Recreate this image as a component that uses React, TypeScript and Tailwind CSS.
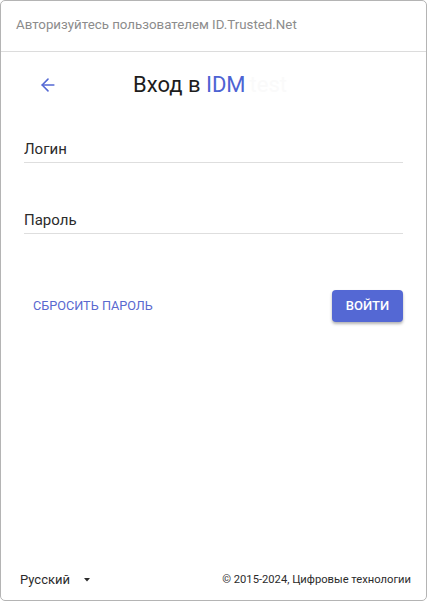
import { ArrowLeft } from "lucide-react";

export default function App() {
  return (
    <div
      className="flex h-[601px] w-[427px] flex-col overflow-hidden rounded-[5px] border border-[#b4b4b4] bg-white text-[#212121]"
      style={{ fontFamily: "Roboto, 'Liberation Sans', sans-serif" }}
    >
      <header className="flex h-[51px] shrink-0 items-center border-b border-[#dcdcdc] px-[15px] pb-[2px]">
        <span className="text-[13.3px] text-[#8c8c8c]">Авторизуйтесь пользователем ID.Trusted.Net</span>
      </header>

      <main className="flex flex-1 flex-col px-[23px]">
        <div className="mt-[18px] flex h-[30px] items-center">
          <button className="ml-[13px] flex h-[24px] w-[22px] items-center justify-center text-[#5468d4]">
            <ArrowLeft size={20} strokeWidth={1.9} />
          </button>
          <h1 className="ml-[74px] text-[22px] leading-none text-[#1d1d1d]">
            Вход в <span className="text-[#4d63d3]">IDM</span>
            <span className="ml-[4px] text-[#fafafa]">test</span>
          </h1>
        </div>

        <label className="mt-[35px] block">
          <input
            placeholder="Логин"
            className="h-[28px] w-full border-b border-[#dedede] bg-transparent text-[15px] outline-none placeholder:text-[#2b2b2b]"
          />
        </label>

        <label className="mt-[43px] block">
          <input
            type="password"
            placeholder="Пароль"
            className="h-[28px] w-full border-b border-[#dedede] bg-transparent text-[15px] outline-none placeholder:text-[#2b2b2b]"
          />
        </label>

        <div className="mt-[56px] flex items-center justify-between">
          <button className="ml-[9px] text-[12.7px] uppercase text-[#5a69cf]">Сбросить пароль</button>
          <button className="h-[32px] w-[71px] rounded-[4px] bg-[#5468d4] text-[13px] font-medium uppercase text-white shadow-[0_2px_3px_rgba(0,0,0,0.3)]">
            Войти
          </button>
        </div>
      </main>

      <footer className="flex h-[44px] shrink-0 items-center justify-between pl-[19px] pr-[15px] pt-[4px]">
        <div className="flex items-center text-[13px] text-[#2b2b2b]">
          <span>Русский</span>
          <svg width="6" height="4" viewBox="0 0 6 4" className="ml-[14px]">
            <path d="M0 0 L6 0 L3 3.5 Z" fill="#2b2b2b" />
          </svg>
        </div>
        <span className="pt-[1px] text-[11.2px] text-[#2b2b2b]">© 2015-2024, Цифровые технологии</span>
      </footer>
    </div>
  );
}
